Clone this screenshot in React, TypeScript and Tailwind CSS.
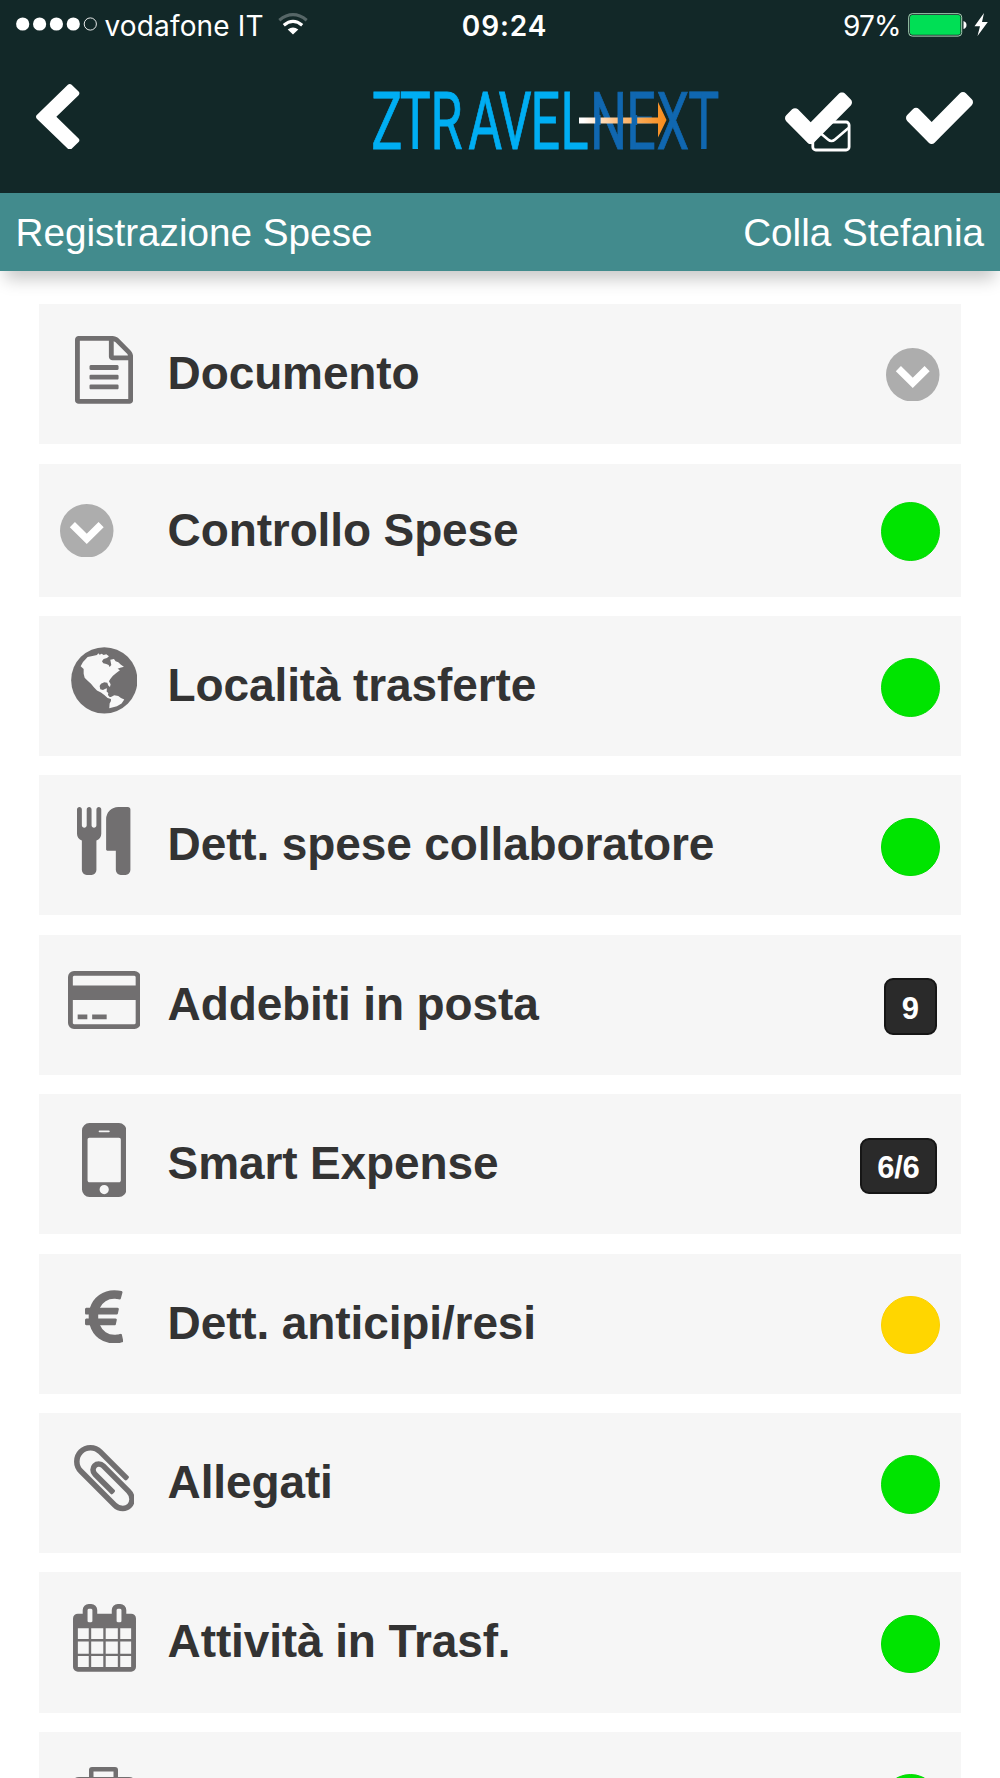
import type { ReactNode } from "react";

const FILE =
  "M1596 380q28 28 48 76t20 88v1152q0 40-28 68t-68 28h-1344q-40 0-68-28t-28-68v-1600q0-40 28-68t68-28h896q40 0 88 20t76 48zm-444-244v376h376q-10-29-22-41l-313-313q-12-12-41-22zm384 1528v-1024h-416q-40 0-68-28t-28-68v-416h-768v1536h1280zm-1024-864q0-14 9-23t23-9h704q14 0 23 9t9 23v64q0 14-9 23t-23 9h-704q-14 0-23-9t-9-23v-64zm736 224q14 0 23 9t9 23v64q0 14-9 23t-23 9h-704q-14 0-23-9t-9-23v-64q0-14 9-23t23-9h704zm0 256q14 0 23 9t9 23v64q0 14-9 23t-23 9h-704q-14 0-23-9t-9-23v-64q0-14 9-23t23-9h704z";
const CUTLERY =
  "M832 64v640q0 61-35.5 111t-92.5 70v779q0 52-38 90t-90 38h-128q-52 0-90-38t-38-90v-779q-57-20-92.5-70t-35.5-111v-640q0-26 19-45t45-19 45 19 19 45v416q0 26 19 45t45 19 45-19 19-45v-416q0-26 19-45t45-19 45 19 19 45v416q0 26 19 45t45 19 45-19 19-45v-416q0-26 19-45t45-19 45 19 19 45zm768 0v1600q0 52-38 90t-90 38h-128q-52 0-90-38t-38-90v-512h-224q-13 0-22.5-9.5t-9.5-22.5v-800q0-132 94-226t226-94h256q26 0 45 19t19 45z";
const CARD =
  "M1760 128q66 0 113 47t47 113v1216q0 66-47 113t-113 47h-1600q-66 0-113-47t-47-113v-1216q0-66 47-113t113-47h1600zm-1600 128q-13 0-22.5 9.5t-9.5 22.5v224h1664v-224q0-13-9.5-22.5t-22.5-9.5h-1600zm1600 1280q13 0 22.5-9.5t9.5-22.5v-608h-1664v608q0 13 9.5 22.5t22.5 9.5h1600zm-1504-128v-128h256v128h-256zm384 0v-128h384v128h-384z";
const MOBILE =
  "M976 1408q0-33-23.5-56.5t-56.5-23.5-56.5 23.5-23.5 56.5 23.5 56.5 56.5 23.5 56.5-23.5 23.5-56.5zm208-160v-704q0-13-9.5-22.5t-22.5-9.5h-512q-13 0-22.5 9.5t-9.5 22.5v704q0 13 9.5 22.5t22.5 9.5h512q13 0 22.5-9.5t9.5-22.5zm-192-848q0-16-16-16h-160q-16 0-16 16t16 16h160q16 0 16-16zm288-16v1024q0 52-38 90t-90 38h-512q-52 0-90-38t-38-90v-1024q0-52 38-90t90-38h512q52 0 90 38t38 90z";
const EURO =
  "M1362 1185l35 159q3 12-3 22.5t-17 14.5l-5 1q-4 2-10.5 3.5t-16 4.5-21.5 5.5-25.5 5-30 5-33.5 4.5-36.5 3-38.5 1q-234 0-409-130.5t-238-351.5h-95q-13 0-22.5-9.5t-9.5-22.5v-113q0-13 9.5-22.5t22.5-9.5h66q-2-57 1-105h-67q-14 0-23-9t-9-23v-114q0-14 9-23t23-9h98q67-210 243.5-338t400.5-128q102 0 194 23 11 3 20 15 6 11 3 24l-43 159q-3 13-14 19.5t-24 2.5l-4-1q-4-1-11.5-2.5l-17.5-3.5-22.5-3.5-26-3-29-2.5-29.5-1q-126 0-226 64t-150 176h468q16 0 25 12 10 12 7 26l-24 114q-5 26-32 26h-488q-3 37 0 105h459q15 0 25 12 9 12 6 27l-24 112q-2 11-11 18.5t-20 7.5h-387q48 117 149.5 185.5t228.5 68.5q18 0 36-1.5t33.5-3.5 29.5-4.5 24.5-5 18.5-4.5l12-3 5-2q13-5 26 2 12 7 15 21z";
const CLIP =
  "M1596 1385q0 117-79 196t-196 79q-135 0-235-100l-777-776q-113-115-113-271 0-159 110-270t269-111q158 0 273 113l605 606q10 10 10 22 0 16-30.5 46.5t-46.5 30.5q-13 0-23-10l-606-607q-79-77-181-77-106 0-179 75t-73 181q0 105 76 181l776 777q63 63 145 63 64 0 106-42t42-106q0-82-63-145l-581-581q-26-24-60-24-29 0-48 19t-19 48q0 32 25 59l410 410q10 10 10 22 0 16-31 47t-47 31q-12 0-22-10l-410-410q-63-61-63-149 0-82 57-139t139-57q88 0 149 63l581 581q100 98 100 235z";
const CALENDAR =
  "M192 1664h288v-288h-288v288zm352 0h320v-288h-320v288zm-352-352h288v-320h-288v320zm352 0h320v-320h-320v320zm-352-384h288v-288h-288v288zm736 736h320v-288h-320v288zm-384-736h320v-288h-320v288zm768 736h288v-288h-288v288zm-384-352h320v-320h-320v320zm-352-864v-288q0-13-9.5-22.5t-22.5-9.5h-64q-13 0-22.5 9.5t-9.5 22.5v288q0 13 9.5 22.5t22.5 9.5h64q13 0 22.5-9.5t9.5-22.5zm736 864h288v-320h-288v320zm-384-384h320v-288h-320v288zm384 0h288v-288h-288v288zm32-480v-288q0-13-9.5-22.5t-22.5-9.5h-64q-13 0-22.5 9.5t-9.5 22.5v288q0 13 9.5 22.5t22.5 9.5h64q13 0 22.5-9.5t9.5-22.5zm384-64v1280q0 52-38 90t-90 38h-1408q-52 0-90-38t-38-90v-1280q0-52 38-90t90-38h128v-96q0-66 47-113t113-47h64q66 0 113 47t47 113v96h384v-96q0-66 47-113t113-47h64q66 0 113 47t47 113v96h128q52 0 90 38t38 90z";
const CHECK =
  "M1671 566q0 40-28 68l-724 724-136 136q-28 28-68 28t-68-28l-136-136-362-362q-28-28-28-68t28-68l136-136q28-28 68-28t68 28l294 295 656-657q28-28 68-28t68 28l136 136q28 28 28 68z";
const BACK =
  "M1427 301l-531 531 531 531q19 19 19 45t-19 45l-166 166q-19 19-45 19t-45-19l-742-742q-19-19-19-45t19-45l742-742q19-19 45-19t45 19l166 166q19 19 19 45t-19 45z";

const iconCls = "shrink-0 fill-[#716f70]";

function Glyph({ d, box, cls }: { d: string; box: string; cls: string }) {
  return (
    <svg viewBox={box} className={`${iconCls} ${cls}`}>
      <path d={d} />
    </svg>
  );
}

function Globe() {
  return (
    <svg viewBox="0 0 200 200" className={`${iconCls} mt-[31.5px] h-[66.6px] w-[66.6px]`}>
      <circle cx="100" cy="100" r="99.5" />
      <path
        className="fill-[#f8f8f8]"
        d="M29 58L36 45L50 30L68 26L78 24L82 19L86 23L92 20L98 24L106 22L114 28L108 33L98 36L93 43L97 49L106 51L113 54L116 60L121 54L118 38L129 36L134 43L142 46L150 53L159 59L148 62L140 65L147 70L136 78L126 86L118 96L114 103L119 112L117 120L112 116L109 107L100 106L90 110L86 117L88 127L96 129L102 126L108 124L107 134L112 138L111 144L116 150L122 150L120 156L110 153L100 144L90 137L78 131L68 120L60 110L50 101L41 92L38 80V66z"
      />
      <path className="fill-[#f8f8f8]" d="M120 150L130 145L142 147L150 153L160 158L152 170L138 178L115 184L116 170L120 162z" />
    </svg>
  );
}

function Suitcase() {
  return (
    <svg viewBox="0 0 62 56" className={`${iconCls} mt-[35.2px] h-[56px] w-[62px]`}>
      <path
        fillRule="evenodd"
        d="M16 10V3q0-3 3-3h23q3 0 3 3v7h11q6 0 6 6v34q0 6-6 6H6q-6 0-6-6V16q0-6 6-6zM20.500 4.500v5.500h20V4.500z"
      />
    </svg>
  );
}

function ChevronDisc({ cls }: { cls: string }) {
  return (
    <svg viewBox="0 0 160 160" className={`h-[53.5px] w-[53.5px] shrink-0 ${cls}`}>
      <circle cx="80" cy="80" r="80" className="fill-[#adadad]" />
      <path d="M37 62L80 104L123 62" fill="none" stroke="#fff" strokeWidth="22" />
    </svg>
  );
}

function Dot({ cls }: { cls: string }) {
  return <span className={`h-[58.6px] w-[58.6px] shrink-0 rounded-full border ${cls}`} />;
}

function Badge({ children }: { children: ReactNode }) {
  return (
    <span className="mt-[43.6px] mr-[3px] flex h-[56.5px] min-w-[53.4px] items-center justify-center rounded-[9px] border-2 border-[#161616] bg-[#2a2a2a] px-[15.500px] pt-[4px] text-[31px] leading-none font-bold tracking-[-0.3px] text-white">
      {children}
    </span>
  );
}

const green = "mt-[42.3px] border-[#00d800] bg-[#00e400]";

type Row = { label: string; icon: ReactNode; end: ReactNode; short?: boolean };

const rows: Row[] = [
  {
    label: "Documento",
    icon: <Glyph d={FILE} box="128 0 1536 1792" cls="mt-[31.7px] h-[67.8px] w-[58.1px]" />,
    end: <ChevronDisc cls="mt-[43.7px]" />,
  },
  {
    label: "Controllo Spese",
    short: true,
    icon: <ChevronDisc cls="mt-[40.3px] -ml-[34px]" />,
    end: <Dot cls="mt-[38.6px] border-[#00d800] bg-[#00e400]" />,
  },
  { label: "Località trasferte", icon: <Globe />, end: <Dot cls={green} /> },
  {
    label: "Dett. spese collaboratore",
    icon: <Glyph d={CUTLERY} box="192 0 1408 1792" cls="mt-[31.4px] h-[68px] w-[53.4px]" />,
    end: <Dot cls={green} />,
  },
  {
    label: "Addebiti in posta",
    icon: <Glyph d={CARD} box="0 128 1920 1536" cls="mt-[36px] h-[58px] w-[72.5px]" />,
    end: <Badge>9</Badge>,
  },
  {
    label: "Smart Expense",
    icon: <Glyph d={MOBILE} box="512 256 768 1280" cls="mt-[28.4px] h-[74px] w-[44.4px]" />,
    end: <Badge>6/6</Badge>,
  },
  {
    label: "Dett. anticipi/resi",
    icon: <Glyph d={EURO} box="386 0 1012 1408" cls="mt-[36.4px] h-[53.2px] w-[38.3px]" />,
    end: <Dot cls="mt-[42.3px] border-[#fcd000] bg-[#ffd600]" />,
  },
  {
    label: "Allegati",
    icon: <Glyph d={CLIP} box="196 132 1400 1528" cls="mt-[32.3px] h-[66.3px] w-[60.8px]" />,
    end: <Dot cls={green} />,
  },
  {
    label: "Attività in Trasf.",
    icon: <Glyph d={CALENDAR} box="64 0 1664 1792" cls="mt-[31.4px] h-[67.8px] w-[63px]" />,
    end: <Dot cls={green} />,
  },
  { label: "", icon: <Suitcase />, end: <Dot cls={green} /> },
];

function StatusBar() {
  return (
    <div className="flex h-[50px] items-start justify-between font-['Inter']">
      <div className="flex w-[420px] items-start">
        <svg viewBox="0 0 84 14" className="mt-[17.3px] ml-[15px] h-[14px] w-[84px] shrink-0 fill-white">
          <circle cx="7.7" cy="7" r="6.6" />
          <circle cx="24.6" cy="7" r="6.6" />
          <circle cx="41.4" cy="7" r="6.6" />
          <circle cx="58.3" cy="7" r="6.6" />
          <circle cx="75.3" cy="7" r="6.1" fill="none" stroke="#fff" strokeWidth="0.9" />
        </svg>
        <span className="mt-[12px] ml-[5.500px] w-[160px] text-[28px] leading-[28px] tracking-[0.15px] whitespace-nowrap text-white">
          vodafone IT
        </span>
        <svg viewBox="0 0 30 22" className="mt-[13px] ml-[13px] h-[22px] w-[30px]" fill="none" strokeWidth="3.2">
          <path d="M1.3 7.2Q15-3.8 28.7 7.2" stroke="#566667" />
          <path d="M5.8 12.2Q15 4.6 24.2 12.2" stroke="#fff" />
          <path d="M9.7 16.6Q15 12.3 20.3 16.6L15 21.6z" fill="#fff" />
        </svg>
      </div>
      <span className="mt-[12px] ml-[9px] text-[28px] leading-[28px] font-semibold tracking-[0.900px] text-white">
        09:24
      </span>
      <div className="flex w-[420px] items-start justify-end">
        <span className="mt-[12px] text-[28px] leading-[28px] tracking-[-0.9px] text-white">97%</span>
        <svg viewBox="0 0 80 24" className="mt-[13px] mr-[12px] ml-[7.500px] h-[24px] w-[80px]">
          <rect x="0.7" y="0.7" width="53" height="22.4" rx="3.5" fill="none" stroke="#a9d8b8" strokeWidth="1" />
          <rect x="2" y="2" width="50.4" height="19.8" rx="2.2" fill="#00df55" />
          <path d="M55.5 8q3 1 3 4t-3 4z" fill="#fff" />
          <path d="M76 0L66.500 13.200H72L69.500 23L79.800 9H74z" fill="#fff" />
        </svg>
      </div>
    </div>
  );
}

function Logo() {
  return (
    <svg viewBox="0 -5 370 105" className="mt-[20px] ml-[267px] h-[105px] w-[370px] shrink-0 font-['Roboto']">
      <defs>
        <linearGradient id="shaft" x1="0" x2="1" y1="0" y2="0">
          <stop offset="0.05" stopColor="#ffffff" />
          <stop offset="0.4" stopColor="#fdc48a" />
          <stop offset="1" stopColor="#f78b1a" />
        </linearGradient>
      </defs>
      <g fontSize="80" transform="scale(0.65 1)" strokeWidth="0.9">
        <text y="74.300" fill="#00aef3" stroke="#00aef3" x="17.500 61 108.600 166.500 213 262.500 308.600">
          ZTRAVEL
        </text>
        <text y="74.300" fill="#1067b0" stroke="#1067b0" x="354 409.500 456 505">
          NEXT
        </text>
      </g>
      <path d="M219 42.500H298V27L306.500 45L298 62.500V48.500H219z" fill="url(#shaft)" />
      <path d="M235.200 40h5.400v10h-5.400zM257.700 40h5.400v10h-5.400zM271.600 40h5.600v10h-5.600z" fill="#1067b0" />
    </svg>
  );
}

function CheckMail() {
  return (
    <svg viewBox="0 0 70 62" className="mt-[40.500px] ml-[55px] h-[62px] w-[70px] shrink-0">
      <rect x="27.800" y="31" width="36.300" height="28" rx="3" fill="#122828" stroke="#fff" strokeWidth="2.800" />
      <path d="M30 37.500L43 48.500Q46.500 51.500 50 48.500L63.500 37" fill="none" stroke="#fff" strokeWidth="2.600" />
      <svg x="0" y="1.300" width="67" height="52" viewBox="121 334 1550 1188" preserveAspectRatio="none">
        <path d={CHECK} fill="#fff" />
      </svg>
    </svg>
  );
}

export default function App() {
  return (
    <div className="h-[1778px] w-[1000px] overflow-hidden bg-white font-['Liberation_Sans',sans-serif]">
      <header>
        <div className="h-[193px] bg-[#122828]">
          <StatusBar />
          <div className="flex items-start">
            <svg viewBox="410 26 1036 1612" preserveAspectRatio="none" className="mt-[33.800px] ml-[36.300px] h-[65.600px] w-[43.400px] shrink-0">
              <path d={BACK} fill="#fff" />
            </svg>
            <div className="ml-[13.300px]">
              <Logo />
            </div>
            <CheckMail />
            <svg viewBox="121 334 1550 1188" preserveAspectRatio="none" className="mt-[41.800px] ml-[51px] h-[52px] w-[67px] shrink-0">
              <path d={CHECK} fill="#fff" />
            </svg>
          </div>
        </div>
        <div className="flex h-[77.800px] items-center justify-between bg-[#428b8d] pt-[2px] pr-[16px] pl-[15.500px] text-[38.700px] text-white shadow-[0_13px_16px_-5px_rgba(0,0,0,0.22)]">
          <span>Registrazione Spese</span>
          <span>Colla Stefania</span>
        </div>
      </header>
      <main className="mt-[33.400px] flex flex-col gap-[19.300px] px-[38.600px]">
        {rows.map((row, i) => (
          <section
            key={i}
            className={`flex shrink-0 items-start bg-[#f6f6f6] pr-[21.500px] ${row.short ? "h-[132.900px]" : "h-[140.150px]"}`}
          >
            <div className="flex w-[131px] shrink-0 justify-center">{row.icon}</div>
            <h2
              className={`-ml-[2px] flex-1 text-[46px] leading-[46px] font-bold tracking-[-0.12px] whitespace-nowrap text-[#333] ${row.short ? "mt-[43.400px]" : "mt-[46px]"}`}
            >
              {row.label}
            </h2>
            {row.end}
          </section>
        ))}
      </main>
    </div>
  );
}
